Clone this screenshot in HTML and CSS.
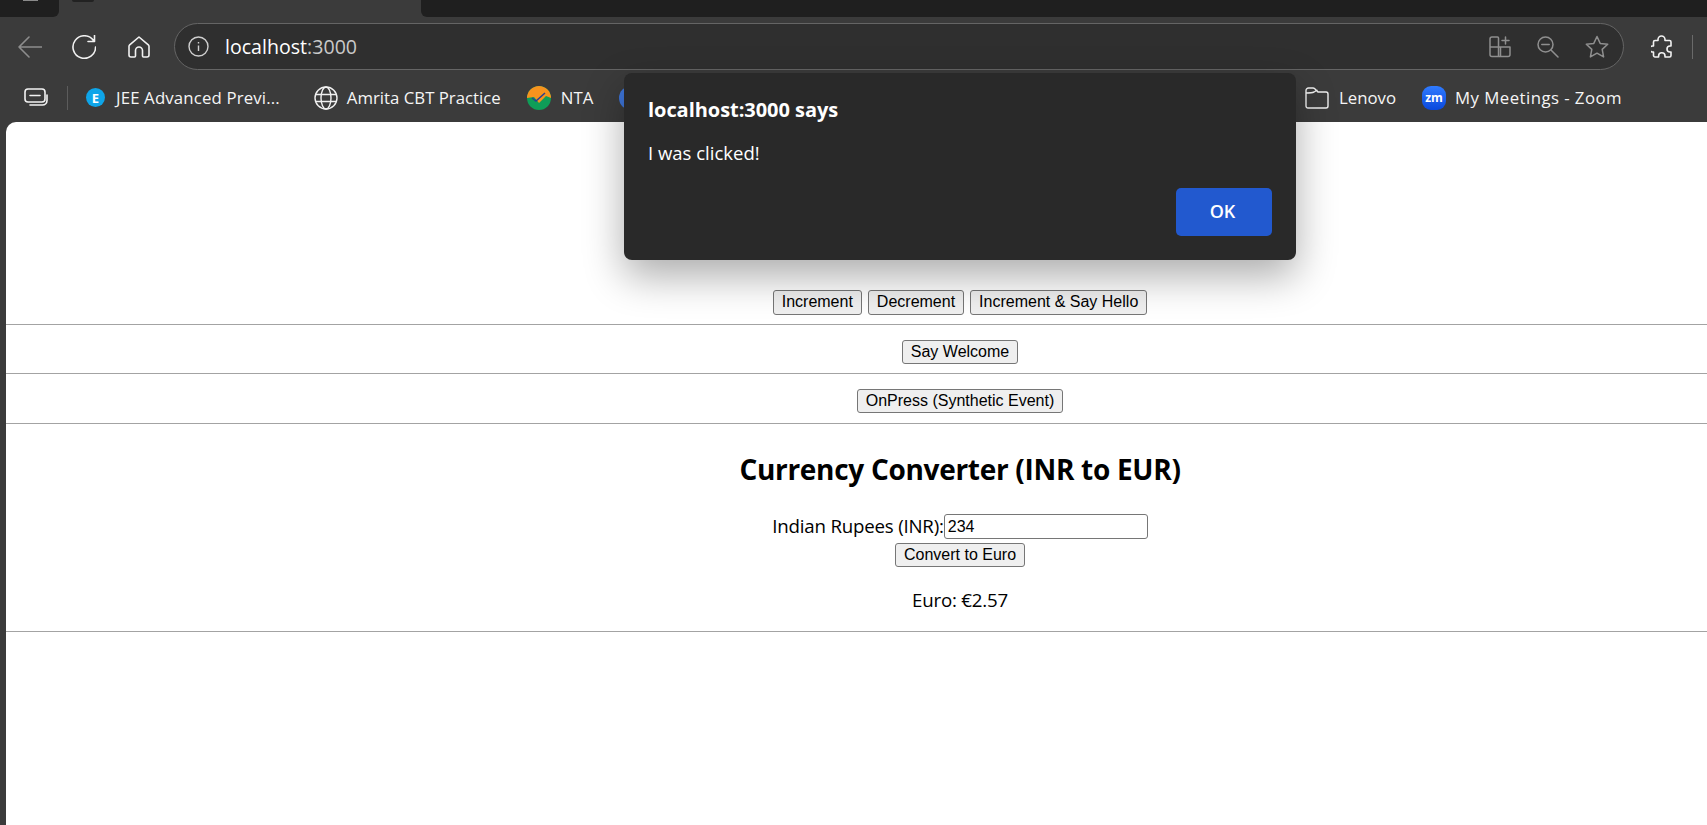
FILE: index.html
```html
<!DOCTYPE html>
<html lang="en">
<head>
  <meta charset="UTF-8">
  <title>localhost:3000</title>
  <link rel="stylesheet" href="styles.css">
</head>
<body>
  <div class="tabstrip">
    <div class="tab-dark tab-left"><span class="tab-mark"></span></div>
    <div class="tab-active"><span class="tab-favicon"></span></div>
    <div class="tab-dark tab-right"></div>
  </div>

  <div class="toolbar">
    <svg class="nav-icon dim" width="24" height="24" viewBox="0 0 24 24"><path d="M23.5 12H1M11 2 1 12l10 10"/></svg>
    <svg class="nav-icon" width="24" height="24" viewBox="0 0 24 24"><path d="M21.5 5.5A11.3 11.3 0 1 0 23.6 12M22.5.5v6h-6.5"/></svg>
    <svg class="nav-icon" width="22" height="22" viewBox="0 0 22 22"><path d="M11 1 1.4 9.2c-.3.3-.4.6-.4 1V19c0 1.1.9 2 2 2h3.5c.6 0 1-.4 1-1v-5.5a3.5 3.5 0 0 1 7 0V20c0 .6.4 1 1 1H19c1.1 0 2-.9 2-2v-8.8c0-.4-.1-.7-.4-1z"/></svg>
    <div class="addressbar">
      <svg class="info-icon" width="21" height="21" viewBox="0 0 21 21"><circle cx="10.5" cy="10.5" r="9.5"/><path d="M10.5 9.5v5.5M10.5 6v1.5"/></svg>
      <span class="url">localhost<span class="url-port">:3000</span></span>
      <svg class="addr-icon" width="22" height="22" viewBox="0 0 22 22"><path d="M9.5 2v18.5H3a2 2 0 0 1-2-2V3a2 2 0 0 1 2-2h5.5a1 1 0 0 1 1 1zM1 11h20v7.5a2 2 0 0 1-2 2H9.5M11.5 11v9.5M16.5 1v7M13 4.5h7"/></svg>
      <svg class="addr-icon" width="22" height="22" viewBox="0 0 22 22"><circle cx="8.5" cy="8.5" r="7.5"/><path d="M4.8 8.5h7.4M14 14l7 7"/></svg>
      <svg class="addr-icon" width="24" height="24" viewBox="0 0 24 24"><path d="m12 1.5 3.2 6.9 7.5.9-5.5 5.1 1.4 7.5-6.6-3.7-6.6 3.7 1.4-7.5-5.5-5.1 7.5-.9z"/></svg>
    </div>
    <svg class="nav-icon puzzle" width="22" height="24" viewBox="0 0 22 24"><path d="M7 5.5V4.500a3.500 3.500 0 0 1 7 0v1h4.500c.8 0 1.500.7 1.500 1.500v4h-1a3 3 0 0 0 0 6h1v3.500c0 .8-.7 1.500-1.500 1.500H14v-1a3.200 3.200 0 0 0-6.400 0v1H4c-.8 0-1.500-.7-1.500-1.500V17h-1a3 3 0 0 1 0-6h1V7c0-.8.7-1.500 1.500-1.500z"/></svg>
    <span class="toolbar-rule"></span>
  </div>

  <div class="bookmarks">
    <svg class="nav-icon collections" width="24" height="20" viewBox="0 0 24 20"><rect x="1" y="1" width="20" height="13" rx="3"/><path d="M6 7.5h10M23 7v5.500a4.500 4.500 0 0 1-4.500 4.500H6"/></svg>
    <span class="bookmark-rule"></span>
    <a class="bookmark bookmark-jee">
      <span class="fav fav-e">E</span>
      JEE Advanced Previ...
    </a>
    <a class="bookmark bookmark-globe">
      <svg class="fav-line" width="24" height="24" viewBox="0 0 24 24"><circle cx="12" cy="12" r="11"/><ellipse cx="12" cy="12" rx="5" ry="11"/><path d="M1.5 8.5h21M1.5 15.5h21"/></svg>
      Amrita CBT Practice
    </a>
    <a class="bookmark">
      <svg width="24" height="24" viewBox="0 0 24 24"><circle cx="12" cy="12" r="12" fill="#0f9d58"/><path d="M0 12a12 12 0 0 1 24 0l-5-2-7 7-5-6z" fill="#f7931e"/><path d="m5 12 4 3 9-8" fill="none" stroke="#2b3f8f" stroke-width="1.5"/></svg>
      NTA
    </a>
    <span class="fav fav-hidden"></span>
    <a class="bookmark bookmark-push">
      <svg class="fav-line" width="24" height="22" viewBox="0 0 24 22"><path d="M1 6V3.500A2.500 2.500 0 0 1 3.500 1H8c.6 0 1.100.2 1.500.6L13 5h8a2 2 0 0 1 2 2v12a2 2 0 0 1-2 2H3a2 2 0 0 1-2-2zc3 0 6 0 8-1l3.500-2"/></svg>
      Lenovo
    </a>
    <a class="bookmark bookmark-zoom">
      <span class="fav fav-zoom">zm</span>
      My Meetings - Zoom
    </a>
  </div>

  <main class="page">
    <section class="row row-counter">
      <button class="btn">Increment</button>
      <button class="btn">Decrement</button>
      <button class="btn">Increment &amp; Say Hello</button>
    </section>
    <hr class="rule">
    <section class="row row-welcome">
      <button class="btn">Say Welcome</button>
    </section>
    <hr class="rule">
    <section class="row row-press">
      <button class="btn">OnPress (Synthetic Event)</button>
    </section>
    <hr class="rule">
    <section class="converter">
      <h2>Currency Converter (INR to EUR)</h2>
      <div class="field">
        <label for="inr">Indian Rupees (INR):</label>
        <input id="inr" type="text" value="234">
      </div>
      <button class="btn">Convert to Euro</button>
      <p class="result">Euro: €2.57</p>
    </section>
    <hr class="rule">
  </main>

  <div class="dialog">
    <div class="dialog-title">localhost:3000 says</div>
    <div class="dialog-text">I was clicked!</div>
    <div class="dialog-actions">
      <button class="dialog-ok">OK</button>
    </div>
  </div>
</body>
</html>
```

FILE: styles.css
```css
html, body {
  margin: 0;
  height: 825px;
  overflow: hidden;
}
body {
  background: #3b3b3b;
  font-family: "Open Sans", "Noto Sans", sans-serif;
  color: #000;
}

/* browser chrome */
.tabstrip {
  display: flex;
  height: 17px;
}
.tab-dark {
  background: #1f1f1f;
}
.tab-left {
  width: 59px;
  border-bottom-right-radius: 6px;
  position: relative;
}
.tab-mark {
  position: absolute;
  left: 23px;
  top: 0;
  width: 15px;
  height: 1px;
  background: #8a8a8a;
}
.tab-active {
  width: 362px;
  padding-left: 13px;
  box-sizing: border-box;
}
.tab-favicon {
  display: block;
  width: 22px;
  height: 2px;
  background: #222;
  border-radius: 0 0 3px 3px;
}
.tab-right {
  flex: 1;
  border-bottom-left-radius: 6px;
}
.toolbar {
  display: flex;
  align-items: center;
  height: 56px;
  box-sizing: border-box;
  padding: 3px 0 0 18px;
}
.nav-icon {
  flex: none;
  fill: none;
  stroke: #f2f2f2;
  stroke-width: 1.6;
  stroke-linejoin: round;
  stroke-linecap: round;
}
.nav-icon.dim {
  stroke: #8d8d8d;
}
.nav-icon + .nav-icon {
  margin-left: 30px;
}
.toolbar .nav-icon:nth-child(3) {
  margin-left: 32px;
}
.addressbar {
  display: flex;
  align-items: center;
  width: 1450px;
  height: 47px;
  box-sizing: border-box;
  margin-left: 24px;
  padding: 0 14px 0 13px;
  background: #2f2f2f;
  border: 1.5px solid #656565;
  border-radius: 24px;
}
.info-icon {
  fill: none;
  stroke: #cfcfcf;
  stroke-width: 1.4;
}
.url {
  flex: 1;
  margin-left: 16px;
  font-size: 19.6px;
  color: #fff;
}
.url-port {
  color: #c9c9c9;
}
.addr-icon {
  fill: none;
  stroke: #8f8f8f;
  stroke-width: 1.5;
  stroke-linejoin: round;
  stroke-linecap: round;
  margin-left: 26px;
}
.toolbar .puzzle {
  margin-left: 27px;
}
.toolbar-rule {
  width: 1px;
  height: 24px;
  margin-left: 19px;
  background: #6a6a6a;
}
.bookmarks {
  display: flex;
  align-items: center;
  height: 49px;
  padding: 0 85px 0 24px;
  color: #f5f5f5;
  font-size: 16.8px;
}
.bookmark-rule {
  width: 1px;
  height: 24px;
  margin-left: 19px;
  background: #5c5c5c;
}
.bookmark {
  display: flex;
  align-items: center;
  gap: 10px;
  margin-left: 26px;
  white-space: nowrap;
}
.bookmark-jee {
  gap: 11px;
  margin-left: 18px;
  letter-spacing: 0.15px;
}
.bookmark-globe {
  gap: 9px;
  margin-left: 34px;
}
.bookmark-push {
  margin-left: auto;
}
.bookmark-zoom {
  gap: 9px;
  letter-spacing: 0.45px;
}
.fav {
  display: flex;
  align-items: center;
  justify-content: center;
  width: 24px;
  height: 24px;
  border-radius: 50%;
  color: #fff;
  font-weight: 700;
  font-size: 13px;
}
.fav-e {
  width: 19px;
  height: 19px;
  background: #0ea5e9;
}
.fav-zoom {
  border-radius: 9px;
  background: linear-gradient(#2f7bff, #0a48dc);
  font-size: 12px;
  letter-spacing: 0;
}
.fav-hidden {
  margin-left: 26px;
  background: #3d74d8;
}
.fav-line {
  fill: none;
  stroke: #f0f0f0;
  stroke-width: 1.4;
}

/* page content, the app is centred on a wider window than the one shown */
.page {
  height: 703px;
  margin-left: 6px;
  background: #fff;
  border-top-left-radius: 10px;
}
.row {
  display: flex;
  justify-content: center;
  gap: 6px;
  padding-left: 207px;
}
.row-counter {
  padding-top: 168px;
  padding-bottom: 9px;
}
.row-welcome {
  padding-top: 15px;
  padding-bottom: 9px;
}
.row-press {
  padding-top: 15px;
  padding-bottom: 10px;
}
.rule {
  height: 1px;
  margin: 0;
  border: 0;
  background: #a3a3a3;
}
.btn {
  height: 24px;
  padding: 0 8px;
  border: 1px solid #767676;
  border-radius: 3px;
  background: #efefef;
  color: #000;
  font: 16px "Liberation Sans", Arial, sans-serif;
}
.row-counter .btn {
  height: 25px;
  padding-bottom: 2px;
}
.converter {
  display: flex;
  flex-direction: column;
  align-items: center;
  padding-left: 207px;
  font-size: 18.7px;
  letter-spacing: -0.2px;
}
.converter h2 {
  margin: 25px 0;
  font-size: 28px;
  letter-spacing: -0.3px;
  line-height: 40px;
}
.field {
  display: flex;
  align-items: center;
  height: 25px;
  margin-bottom: 4px;
}
.field label {
  margin-bottom: 2px;
}
.field input {
  width: 204px;
  height: 25px;
  box-sizing: border-box;
  padding: 0 3px;
  border: 1px solid #767676;
  border-radius: 3px;
  font: 16px "Liberation Sans", Arial, sans-serif;
}
.result {
  margin: 20px 0 18px;
  line-height: 26px;
}

/* alert box */
.dialog {
  position: absolute;
  left: 624px;
  top: 73px;
  width: 672px;
  height: 187px;
  box-sizing: border-box;
  padding: 25px 24px 24px;
  display: flex;
  flex-direction: column;
  background: #292929;
  border-radius: 8px;
  color: #fff;
  box-shadow: 0 16px 40px rgba(0, 0, 0, 0.33);
}
.dialog-title {
  font-size: 20px;
  font-weight: 700;
  letter-spacing: -0.05px;
  line-height: 24px;
}
.dialog-text {
  margin-top: 19px;
  font-size: 18.5px;
  line-height: 24px;
}
.dialog-actions {
  display: flex;
  justify-content: flex-end;
  margin-top: auto;
}
.dialog-ok {
  width: 96px;
  height: 48px;
  padding: 0 3px 2px 0;
  border: 0;
  border-radius: 5px;
  background: #2259cf;
  color: #fff;
  font: 600 18px "Open Sans", sans-serif;
}
```
